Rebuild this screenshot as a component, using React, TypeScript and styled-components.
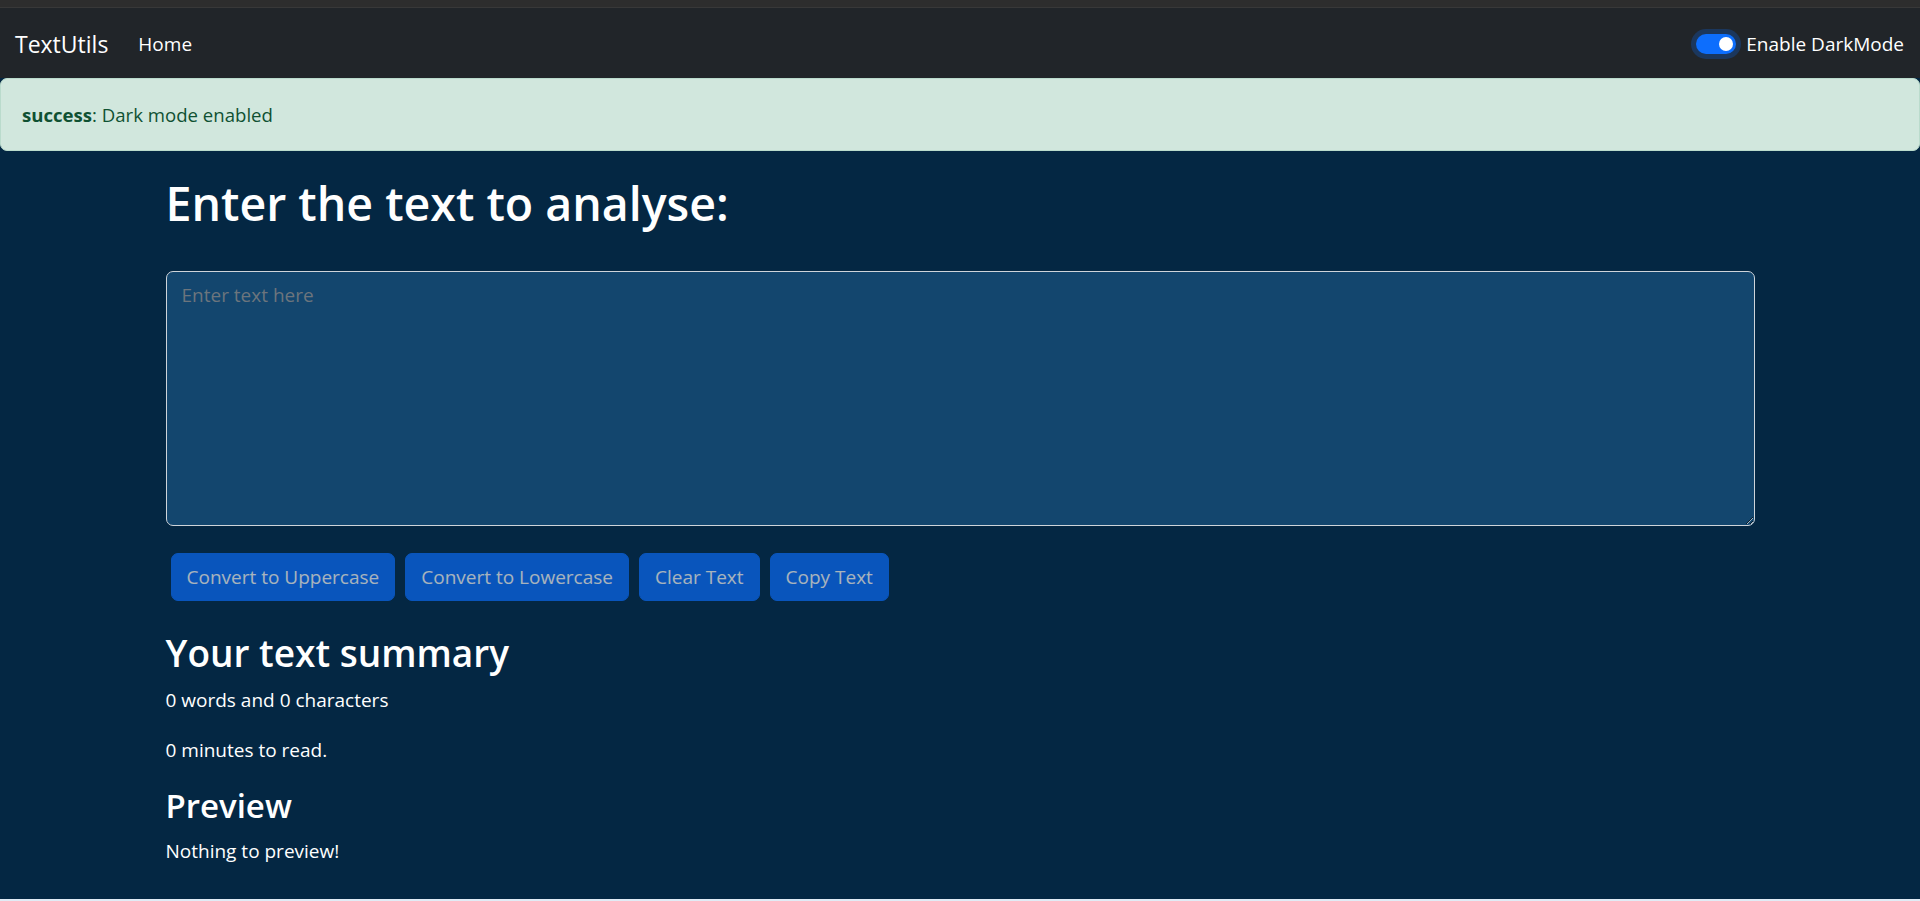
import React, { useState } from "react";
import styled, { createGlobalStyle } from "styled-components";

const GlobalStyle = createGlobalStyle`
    * {
        box-sizing: border-box;
    }

    html, body {
        margin: 0;
        padding: 0;
        background: #e1ebf5;
        font-family: "Open Sans", "Noto Sans", sans-serif;
    }
`;

const Page = styled.div`
    display: flex;
    flex-direction: column;
    min-height: 899px;
    background: #042743;
`;

const TopStrip = styled.div`
    height: 8px;
    background: #2d2d2d;
    border-bottom: 1px solid #383838;
`;

const Navbar = styled.nav`
    display: flex;
    align-items: center;
    justify-content: space-between;
    height: 70px;
    padding: 2px 16px 0 15px;
    background: #212529;
`;

const NavLeft = styled.div`
    display: flex;
    align-items: center;
`;

const Brand = styled.a`
    color: #fff;
    font-size: 23px;
    line-height: 32px;
    text-decoration: none;
    margin-right: 30px;
`;

const NavLink = styled.a`
    color: #fff;
    font-size: 19px;
    line-height: 28px;
    text-decoration: none;
`;

const SwitchWrap = styled.label`
    display: flex;
    align-items: center;
    gap: 10px;
    color: #fff;
    font-size: 19px;
    line-height: 28px;
    cursor: pointer;
`;

const Track = styled.span<{ on: boolean }>`
    position: relative;
    width: 40px;
    height: 20px;
    border-radius: 10px;
    background: ${p => (p.on ? "#0d6efd" : "#495057")};
    box-shadow: 0 0 0 5px rgba(13, 110, 253, 0.25);
`;

const Knob = styled.span<{ on: boolean }>`
    position: absolute;
    top: 3px;
    left: ${p => (p.on ? "23px" : "3px")};
    width: 14px;
    height: 14px;
    border-radius: 50%;
    background: #fff;
`;

const Alert = styled.div`
    padding: 20px 21px;
    line-height: 31px;
    font-size: 18.6px;
    color: #0f5132;
    background: #d1e7dd;
    border: 1px solid #badbcc;
    border-radius: 7px;
`;

const Container = styled.main`
    width: 1589px;
    margin: 0 auto;
    color: #fff;
`;

const Title = styled.h1`
    margin: 24px 0 40px;
    font-size: 46.5px;
    line-height: 56px;
    font-weight: 600;
`;

const TextBox = styled.textarea`
    display: block;
    width: 100%;
    height: 255px;
    padding: 9px 15px 5px;
    font-family: inherit;
    font-size: 19px;
    line-height: 29px;
    color: #fff;
    background: #13466e;
    border: 1px solid #ced4da;
    border-radius: 7px;
    outline: none;

    &::placeholder {
        color: #6c757d;
    }
`;

const ButtonRow = styled.div`
    display: flex;
    flex-wrap: wrap;
    gap: 10px;
    margin: 27px 0 0 5px;
`;

const Button = styled.button`
    height: 48px;
    padding: 0 15px;
    font-family: inherit;
    font-size: 19px;
    color: #fff;
    background: #0d6efd;
    border: 1px solid #0d6efd;
    border-radius: 7px;
    opacity: 0.65;

    &:disabled {
        cursor: default;
    }
`;

const Section = styled.section`
    margin-top: 30px;
`;

const SubTitle = styled.h2<{ small?: boolean }>`
    margin: ${p => (p.small ? "7px 0 10.5px" : "0 0 11px")};
    font-size: ${p => (p.small ? "33px" : "37px")};
    line-height: ${p => (p.small ? "40px" : "44px")};
    font-weight: 600;
`;

const Line = styled.p`
    margin: 0 0 21px;
    font-size: 19px;
    line-height: 29px;
`;

const buttons = ["Convert to Uppercase", "Convert to Lowercase", "Clear Text", "Copy Text"];

const App: React.FC = () => {
    const [dark, setDark] = useState<boolean>(true);
    const [text, setText] = useState<string>("");

    const words = text.split(/\s+/).filter(w => w.length !== 0).length;

    return (
        <>
            <GlobalStyle />
            <Page>
                <TopStrip />
                <Navbar>
                    <NavLeft>
                        <Brand href="#">TextUtils</Brand>
                        <NavLink href="#">Home</NavLink>
                    </NavLeft>
                    <SwitchWrap onClick={() => setDark(!dark)}>
                        <Track on={dark}><Knob on={dark} /></Track>
                        Enable DarkMode
                    </SwitchWrap>
                </Navbar>
                <Alert>
                    <strong>success</strong>: Dark mode enabled
                </Alert>

                <Container>
                    <Title>Enter the text to analyse:</Title>
                    <TextBox
                        placeholder="Enter text here"
                        value={text}
                        onChange={e => setText(e.target.value)}
                    />
                    <ButtonRow>
                        {buttons.map(b => (
                            <Button key={b} disabled={text.length === 0}>{b}</Button>
                        ))}
                    </ButtonRow>

                    <Section>
                        <SubTitle>Your text summary</SubTitle>
                        <Line>{words} words and {text.length} characters</Line>
                        <Line>{0.008 * words} minutes to read.</Line>
                        <SubTitle small>Preview</SubTitle>
                        <Line>{text.length > 0 ? text : "Nothing to preview!"}</Line>
                    </Section>
                </Container>
            </Page>
        </>
    );
};

export default App;
